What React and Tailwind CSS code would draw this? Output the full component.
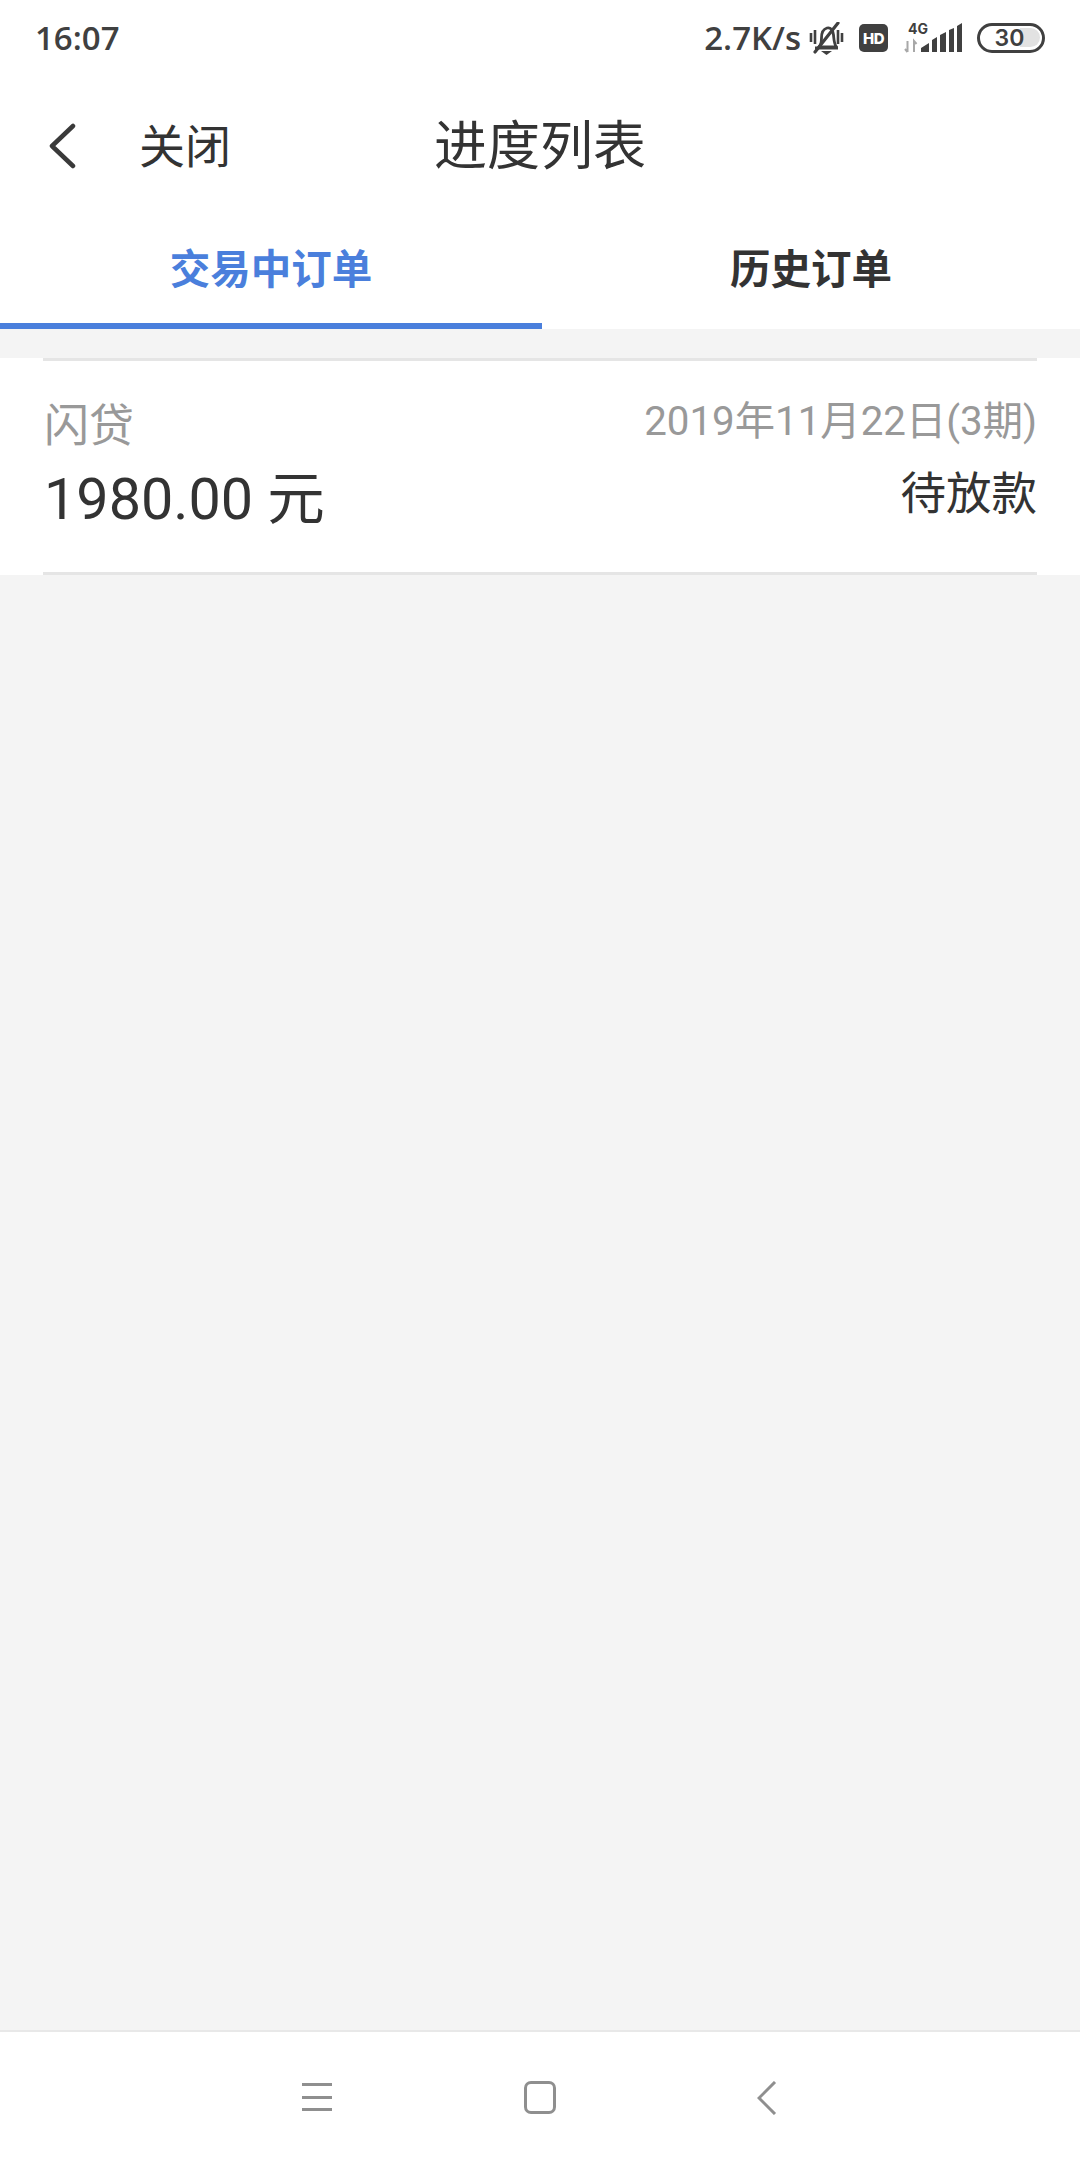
const SANS = "font-['Roboto','Noto_Sans_CJK_SC',sans-serif]";

function MutedBell() {
  return (
    <svg width="35" height="33" viewBox="0 0 35 33" fill="none" stroke="#404040" className="shrink-0">
      <path d="M10 25c2-2 2.500-4 2.500-9 0-6 2-9 5.500-10s6 2 6.500 7c.5 5 .5 9 3 12z" strokeWidth="2.800" strokeLinejoin="round" />
      <path d="M6 26h23" strokeWidth="3" />
      <path d="M12 29h11l-5.500 4z" fill="#404040" stroke="none" />
      <path d="M2 11v9M6 8v14M29 8v14M33 11v9" strokeWidth="2.600" />
      <path d="M6 30 29 1" strokeWidth="3.200" strokeLinecap="round" />
    </svg>
  );
}

function Signal() {
  return (
    <div className="relative h-[30px] w-[58px] shrink-0">
      <span className="absolute left-[4px] top-0 font-['Inter',sans-serif] text-[14px] leading-[11px] font-bold text-[#404040]">4G</span>
      <svg width="58" height="30" viewBox="0 0 58 30" className="absolute left-0 top-0">
        <path d="M3.500 18v11M1 26l2.500 3M10 29V18l2.500 3" stroke="#a8a8a8" strokeWidth="2" fill="none" />
        <path d="M17 29v-4l8-5v9zM28 29V17l5-3v15zM36 29V12l6-3v20zM45 29V7l5-2v24zM53 29V3l5-3v29z" fill="#404040" />
      </svg>
    </div>
  );
}

function Battery() {
  return (
    <div className="relative flex h-[30px] w-[68px] shrink-0 items-center justify-center rounded-full border-[3.5px] border-[#404040]">
      <div className="absolute right-[2px] top-[2px] h-[19px] w-[20px] rounded-r-full bg-[#e2e2e2]" />
      <span className="relative pr-[3px] font-['Inter',sans-serif] text-[23px] leading-none font-semibold text-[#404040]">30</span>
    </div>
  );
}

function StatusBar() {
  return (
    <div className="flex h-[76px] items-center justify-between pl-[35px] pr-[35px] font-['Open_Sans',sans-serif] text-[#404040]">
      <span className="text-[33px] font-semibold">16:07</span>
      <div className="flex items-center">
        <span className="text-[33px] font-semibold">2.7K/s</span>
        <div className="ml-[8px]">
          <MutedBell />
        </div>
        <div className="ml-[15px] flex h-[28px] w-[29px] shrink-0 items-center justify-center rounded-[5px] bg-[#404040]">
          <span className="font-['Inter',sans-serif] text-[15px] leading-none font-extrabold tracking-[-0.5px] text-white">HD</span>
        </div>
        <div className="ml-[16px]">
          <Signal />
        </div>
        <div className="ml-[15px]">
          <Battery />
        </div>
      </div>
    </div>
  );
}

function NavBar() {
  return (
    <div className="relative flex h-[140px] items-center text-[#333333]">
      <svg width="28" height="46" viewBox="0 0 28 46" fill="none" stroke="#3a3a3a" strokeWidth="4.500" strokeLinecap="round" strokeLinejoin="round" className="ml-[48px] shrink-0">
        <path d="M25 3 4 23l21 20" />
      </svg>
      <span className="ml-[63px] pt-[2px] text-[46px] leading-none">关闭</span>
      <span className="absolute left-0 right-0 pt-[3px] text-center text-[53px] leading-none">进度列表</span>
    </div>
  );
}

function Tabs() {
  return (
    <div className="flex h-[113px]">
      <div className="flex w-[542px] flex-col border-b-[6px] border-[#4a7fdc]">
        <div className="flex flex-1 items-center justify-center pt-[1px] text-[40.500px] leading-none font-bold text-[#4a7fdc]">交易中订单</div>
      </div>
      <div className="flex flex-1 items-center justify-center pb-[5px] text-[40.500px] leading-none font-bold text-[#333333]">历史订单</div>
    </div>
  );
}

function OrderCard() {
  return (
    <div className="mt-[29px] bg-white px-[43px]">
      <div className="flex h-[217px] justify-between border-y-[3px] border-[#e5e5e5] pt-[36px]">
        <div className="flex flex-col">
          <span className="pl-[1px] text-[45px] leading-[60px] text-[#999999]">闪贷</span>
          <span className="mt-[10px] pl-[1px] text-[57.500px] leading-[66px] text-[#333333]">1980.00 元</span>
        </div>
        <div className="flex flex-col items-end">
          <span className="mt-[-2px] text-[40.300px] leading-[54px] text-[#999999]">2019年11月22日(3期)</span>
          <span className="mt-[16px] text-[45.500px] leading-[60px] text-[#333333]">待放款</span>
        </div>
      </div>
    </div>
  );
}

function BottomNav() {
  return (
    <div className="flex h-[130px] items-start border-t-2 border-[#e8e8e8] bg-white pt-[49px]">
      <div className="ml-[302px] flex h-[32px] w-[30px] flex-col justify-between py-[2px]">
        <div className="h-[3px] bg-[#8f8f8f]" />
        <div className="h-[3px] bg-[#8f8f8f]" />
        <div className="h-[3px] bg-[#8f8f8f]" />
      </div>
      <div className="ml-[192px] h-[33px] w-[32px] rounded-[7px] border-[3px] border-[#8f8f8f]" />
      <svg width="20" height="34" viewBox="0 0 20 34" fill="none" stroke="#8f8f8f" strokeWidth="3" className="ml-[201px]">
        <path d="M18 1 2 17l16 16" />
      </svg>
    </div>
  );
}

export default function App() {
  return (
    <div className={`flex h-[2160px] w-[1080px] flex-col bg-[#f4f4f4] ${SANS}`}>
      <div className="bg-white">
        <StatusBar />
        <NavBar />
        <Tabs />
      </div>
      <OrderCard />
      <div className="flex-1" />
      <BottomNav />
    </div>
  );
}
